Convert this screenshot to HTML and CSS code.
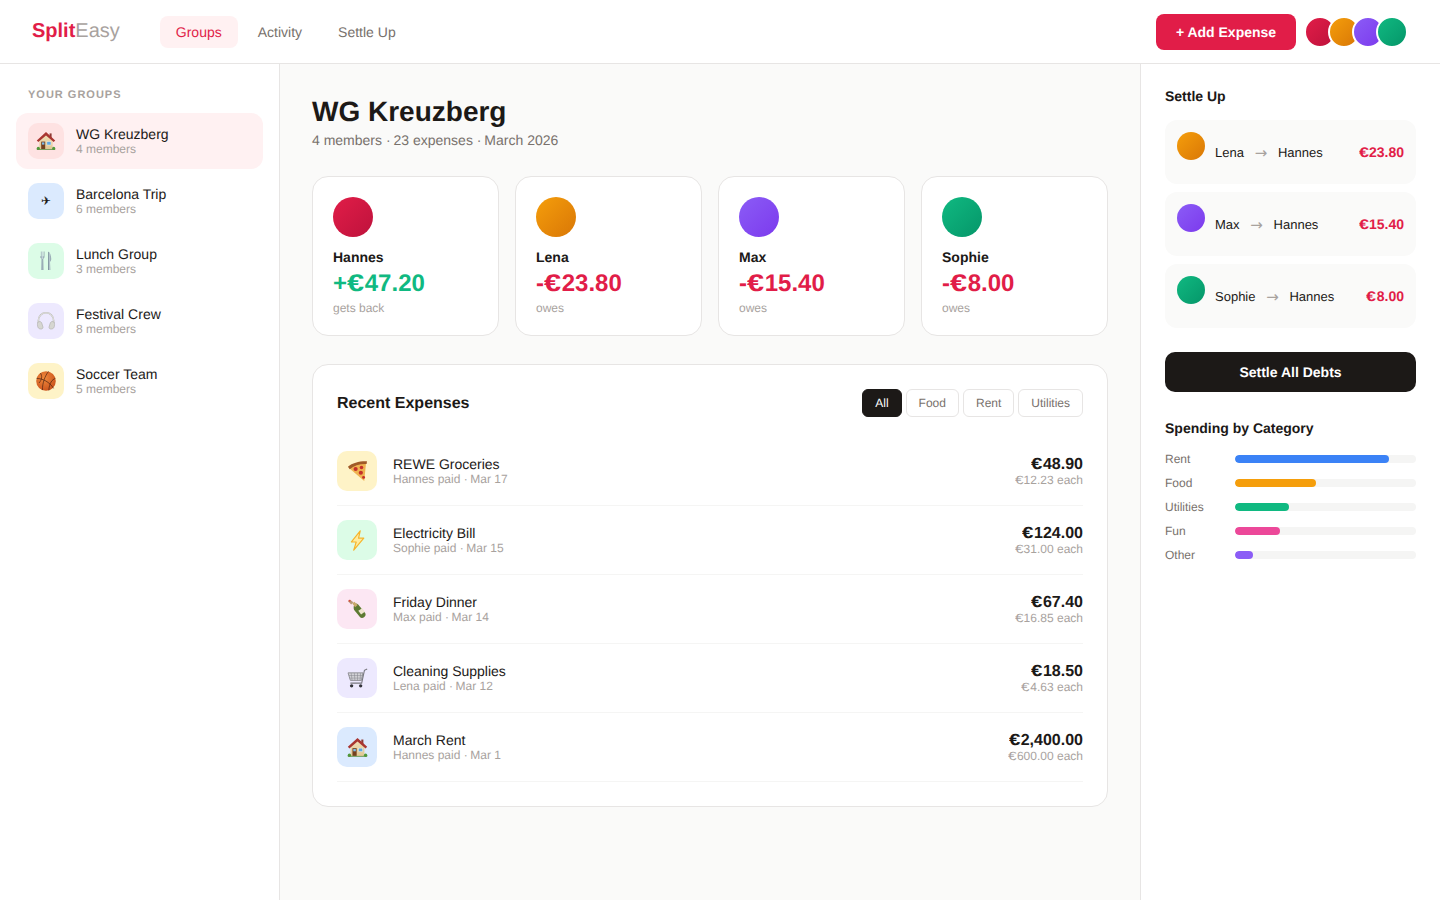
FILE: index.html
```html
<!DOCTYPE html>
<html lang="en">
<head>
<meta charset="utf-8">
<title>SplitEasy</title>
<link rel="stylesheet" href="styles.css">
</head>
<body>
<svg class="sprite" aria-hidden="true">
  <defs>
    <radialGradient id="ball" cx="40%" cy="35%" r="70%"><stop offset="0" stop-color="#f08a3c"/><stop offset="1" stop-color="#c9521c"/></radialGradient>
    <linearGradient id="wall" x1="0" y1="0" x2="0" y2="1"><stop offset="0" stop-color="#f1dfb6"/><stop offset="1" stop-color="#e0c795"/></linearGradient>
    <linearGradient id="steel" x1="0" y1="0" x2="1" y2="0"><stop offset="0" stop-color="#7f939e"/><stop offset=".5" stop-color="#c3d3da"/><stop offset="1" stop-color="#7f939e"/></linearGradient>
    <symbol id="i-house" viewBox="0 0 20 20">
      <rect x="13.6" y="2.4" width="2" height="5" fill="#8e3a34"/>
      <path d="M10 3.5 16.6 9v9H3.4V9z" fill="url(#wall)"/>
      <path d="M10 1 .8 9.4l1.5 1.6L10 4.4l7.7 6.6 1.5-1.6z" fill="#a93631"/>
      <rect x="5.2" y="10.6" width="4" height="7.4" fill="#74401f"/>
      <rect x="6" y="11.4" width="2.4" height="2.2" fill="#7dbbe8"/>
      <rect x="10.9" y="10.6" width="4.1" height="3.4" fill="#5fa9e2" stroke="#f7f0dc" stroke-width=".5"/>
      <circle cx="2.3" cy="17.4" r="1.6" fill="#4f9a3a"/>
      <circle cx="17.7" cy="17.4" r="1.6" fill="#4f9a3a"/>
      <rect x=".8" y="18" width="18.4" height=".8" fill="#5c8f3f"/>
    </symbol>
    <symbol id="i-cutlery" viewBox="0 0 20 20">
      <path d="M6 .6v5.2c0 1 .5 1.6 1.1 2L6.8 19h2.4L8.9 7.8c.6-.4 1.1-1 1.1-2V.6h-.7v4.6h-.6V.6h-.7v4.6h-.6V.6h-.7v4.6h-.6V.6z" fill="url(#steel)" transform="translate(-1.6 0)"/>
      <path d="M11.6 .6c2 1.2 3 4 3 7.4 0 1.6-.6 2.6-1.2 2.8l.4 8.2h-2.4z" fill="url(#steel)" transform="translate(.6 0)"/>
      <path d="M6.4 8v11M12.8 1v18" stroke="#56707c" stroke-width=".4" fill="none"/>
    </symbol>
    <symbol id="i-phones" viewBox="0 0 20 20">
      <path d="M2.4 12V9.4a7.6 7.6 0 0 1 15.2 0V12" fill="none" stroke="#b8b8b3" stroke-width="1.6"/>
      <path d="M2.4 12V9.4a7.6 7.6 0 0 1 15.2 0V12" fill="none" stroke="#eeeeea" stroke-width=".7"/>
      <path d="M2 11c1.4-.9 3-.4 3.6.6l1.4 4.4c.2.9-.4 1.8-1.4 2-1.4.3-3-.4-3.6-1.6-.7-1.4-.8-4.4 0-5.4z" fill="#d6d6d1" stroke="#a2a29e" stroke-width=".5"/>
      <path d="M18 11c-1.4-.9-3-.4-3.6.6l-1.4 4.4c-.2.9.4 1.8 1.4 2 1.4.3 3-.4 3.6-1.6.7-1.4.8-4.4 0-5.4z" fill="#d6d6d1" stroke="#a2a29e" stroke-width=".5"/>
    </symbol>
    <symbol id="i-ball" viewBox="0 0 20 20">
      <circle cx="10" cy="10" r="9.8" fill="url(#ball)"/>
      <g fill="none" stroke="#4a2313" stroke-width=".7">
        <path d="M.6 7.4c6 0 13 3.6 17 10"/>
        <path d="M12.6.4C9 4.6 6.4 12 6.4 19"/>
        <path d="M4.4 2C6.4 5 6 8.6 3 12"/>
        <path d="M19.4 7.4c-3.4 1.2-6 4.6-6.6 12"/>
      </g>
    </symbol>
    <symbol id="i-pizza" viewBox="0 0 20 20">
      <path d="M1.6 6.4C5.6 2.8 12 1 18.2 1.2L16.4 19z" fill="#efb350"/>
      <path d="M.9 5.4C5.2 1.8 12 0 19 .3l-.3 2.6C12.6 2.6 6.6 4.4 2.6 7.8z" fill="#a05a27"/>
      <g fill="#c5302a">
        <circle cx="8.2" cy="7.6" r="2"/>
        <circle cx="13.8" cy="6.2" r="1.7"/>
        <circle cx="13.2" cy="11.2" r="2"/>
        <circle cx="15.8" cy="15.6" r="1.4"/>
      </g>
    </symbol>
    <symbol id="i-bolt" viewBox="0 0 20 20">
      <path d="M12.6 .8 4.2 11.4h4.6L6.4 19.2l9.6-11.4h-5z" fill="#ffec9e" stroke="#f6b42c" stroke-width="1.1" stroke-linejoin="round"/>
    </symbol>
    <symbol id="i-bottle" viewBox="0 0 20 20">
      <path d="M6.8 5.8 9 4.2c1.4.6 2.6 1.6 3.2 3l4.9 5.8c1 1.2.8 3-.6 4.2-1.4 1.2-3.2 1.2-4.2 0L7.4 11.2c-1.2-1-1.4-3.4-.6-5.4z" fill="#5d7a32"/>
      <path d="M5 4.2 7 2.6l3.2 3.2-2.4 2z" fill="#c8a96a"/>
      <path d="M1 2.2 3 .6l3 2.6-2 2z" fill="#b89a78"/>
      <path d="M10.8 11.2l3.6-2.4 2.6 3.4-3.6 2.6z" fill="#efe6cf"/>
      <circle cx="2.4" cy="1.6" r="1" fill="#d44b3c"/>
    </symbol>
    <symbol id="i-cart" viewBox="0 0 20 20">
      <path d="M1 4.6h14.2l-1.4 7.2H3.2z" fill="#d2d2d6" stroke="#85858c" stroke-width=".8" stroke-linejoin="round"/>
      <path d="M4 4.8l.8 7M7 4.8l.5 7M10 4.8v7M13 4.8l-.6 7M1.8 7.2h12.8M2.4 9.6h11.6" fill="none" stroke="#85858c" stroke-width=".5"/>
      <path d="M19.2 1 16.6 2.2 14 14.4H3.2" fill="none" stroke="#77777e" stroke-width="1"/>
      <circle cx="4.4" cy="17" r="1.6" fill="#33333a"/>
      <circle cx="13" cy="17" r="1.6" fill="#33333a"/>
    </symbol>
  </defs>
</svg>
<header class="topbar">
  <div class="logo">Split<span class="logo-light">Easy</span></div>
  <nav class="nav">
    <a class="nav-link active">Groups</a>
    <a class="nav-link">Activity</a>
    <a class="nav-link">Settle Up</a>
  </nav>
  <button class="add-btn">+ Add Expense</button>
  <div class="avatar-stack">
    <span class="stack-av grad-red"></span>
    <span class="stack-av grad-amber"></span>
    <span class="stack-av grad-violet"></span>
    <span class="stack-av grad-green"></span>
  </div>
</header>
<div class="layout">
  <aside class="sidebar">
    <div class="side-label">Your Groups</div>
    <div class="group active">
      <div class="group-icon bg-red"><svg class="ico-g"><use href="#i-house"/></svg></div>
      <div class="group-text"><div class="group-name">WG Kreuzberg</div><div class="group-meta">4 members</div></div>
    </div>
    <div class="group">
      <div class="group-icon bg-blue plane">✈</div>
      <div class="group-text"><div class="group-name">Barcelona Trip</div><div class="group-meta">6 members</div></div>
    </div>
    <div class="group">
      <div class="group-icon bg-green"><svg class="ico-g"><use href="#i-cutlery"/></svg></div>
      <div class="group-text"><div class="group-name">Lunch Group</div><div class="group-meta">3 members</div></div>
    </div>
    <div class="group">
      <div class="group-icon bg-violet"><svg class="ico-g"><use href="#i-phones"/></svg></div>
      <div class="group-text"><div class="group-name">Festival Crew</div><div class="group-meta">8 members</div></div>
    </div>
    <div class="group">
      <div class="group-icon bg-amber"><svg class="ico-g"><use href="#i-ball"/></svg></div>
      <div class="group-text"><div class="group-name">Soccer Team</div><div class="group-meta">5 members</div></div>
    </div>
  </aside>
  <main class="main">
    <h1 class="title">WG Kreuzberg</h1>
    <p class="subtitle">4 members <span class="dot">·</span> 23 expenses <span class="dot">·</span> March 2026</p>
    <section class="balances">
      <div class="bal-card"><div class="bal-av grad-red"></div><div class="bal-name">Hannes</div><div class="bal-amt pos">+<span class="eu">€</span>47.20</div><div class="bal-note">gets back</div></div>
      <div class="bal-card"><div class="bal-av grad-amber"></div><div class="bal-name">Lena</div><div class="bal-amt neg">-<span class="eu">€</span>23.80</div><div class="bal-note">owes</div></div>
      <div class="bal-card"><div class="bal-av grad-violet"></div><div class="bal-name">Max</div><div class="bal-amt neg">-<span class="eu">€</span>15.40</div><div class="bal-note">owes</div></div>
      <div class="bal-card"><div class="bal-av grad-green"></div><div class="bal-name">Sophie</div><div class="bal-amt neg">-<span class="eu">€</span>8.00</div><div class="bal-note">owes</div></div>
    </section>
    <section class="panel">
      <div class="panel-head">
        <h2 class="panel-title">Recent Expenses</h2>
        <div class="filters">
          <button class="filter on">All</button>
          <button class="filter">Food</button>
          <button class="filter">Rent</button>
          <button class="filter">Utilities</button>
        </div>
      </div>
      <div class="exp">
        <div class="exp-icon bg-amber"><svg class="ico-e"><use href="#i-pizza"/></svg></div>
        <div class="exp-text"><div class="exp-name">REWE Groceries</div><div class="exp-meta">Hannes paid <span class="dot">·</span> Mar 17</div></div>
        <div class="exp-right"><div class="exp-amt"><span class="eu">€</span>48.90</div><div class="exp-each"><span class="eu">€</span>12.23 each</div></div>
      </div>
      <div class="exp">
        <div class="exp-icon bg-green"><svg class="ico-e"><use href="#i-bolt"/></svg></div>
        <div class="exp-text"><div class="exp-name">Electricity Bill</div><div class="exp-meta">Sophie paid <span class="dot">·</span> Mar 15</div></div>
        <div class="exp-right"><div class="exp-amt"><span class="eu">€</span>124.00</div><div class="exp-each"><span class="eu">€</span>31.00 each</div></div>
      </div>
      <div class="exp">
        <div class="exp-icon bg-pink"><svg class="ico-e"><use href="#i-bottle"/></svg></div>
        <div class="exp-text"><div class="exp-name">Friday Dinner</div><div class="exp-meta">Max paid <span class="dot">·</span> Mar 14</div></div>
        <div class="exp-right"><div class="exp-amt"><span class="eu">€</span>67.40</div><div class="exp-each"><span class="eu">€</span>16.85 each</div></div>
      </div>
      <div class="exp">
        <div class="exp-icon bg-violet"><svg class="ico-e"><use href="#i-cart"/></svg></div>
        <div class="exp-text"><div class="exp-name">Cleaning Supplies</div><div class="exp-meta">Lena paid <span class="dot">·</span> Mar 12</div></div>
        <div class="exp-right"><div class="exp-amt"><span class="eu">€</span>18.50</div><div class="exp-each"><span class="eu">€</span>4.63 each</div></div>
      </div>
      <div class="exp">
        <div class="exp-icon bg-blue"><svg class="ico-e"><use href="#i-house"/></svg></div>
        <div class="exp-text"><div class="exp-name">March Rent</div><div class="exp-meta">Hannes paid <span class="dot">·</span> Mar 1</div></div>
        <div class="exp-right"><div class="exp-amt"><span class="eu">€</span>2,400.00</div><div class="exp-each"><span class="eu">€</span>600.00 each</div></div>
      </div>
    </section>
  </main>
  <aside class="right">
    <h3 class="right-title">Settle Up</h3>
    <div class="settle">
      <span class="settle-av grad-amber"></span>
      <div class="settle-who"><span>Lena</span><span class="arrow">→</span><span>Hannes</span></div>
      <span class="settle-amt"><span class="eu">€</span>23.80</span>
    </div>
    <div class="settle">
      <span class="settle-av grad-violet"></span>
      <div class="settle-who"><span>Max</span><span class="arrow">→</span><span>Hannes</span></div>
      <span class="settle-amt"><span class="eu">€</span>15.40</span>
    </div>
    <div class="settle">
      <span class="settle-av grad-green"></span>
      <div class="settle-who"><span>Sophie</span><span class="arrow">→</span><span>Hannes</span></div>
      <span class="settle-amt"><span class="eu">€</span>8.00</span>
    </div>
    <button class="settle-all">Settle All Debts</button>
    <h3 class="right-title cat-title">Spending by Category</h3>
    <div class="cat"><span class="cat-label">Rent</span><div class="track"><div class="fill fill-blue" style="width:85%"></div></div></div>
    <div class="cat"><span class="cat-label">Food</span><div class="track"><div class="fill fill-amber" style="width:45%"></div></div></div>
    <div class="cat"><span class="cat-label">Utilities</span><div class="track"><div class="fill fill-green" style="width:30%"></div></div></div>
    <div class="cat"><span class="cat-label">Fun</span><div class="track"><div class="fill fill-pink" style="width:25%"></div></div></div>
    <div class="cat"><span class="cat-label">Other</span><div class="track"><div class="fill fill-violet" style="width:10%"></div></div></div>
  </aside>
</div>
</body>
</html>
```
FILE: styles.css
```css
* { box-sizing: border-box; margin: 0; padding: 0; }
html, body { height: 100%; }
body {
  font-family: "Liberation Sans", Arial, sans-serif;
  color: #1c1917;
  background: #fff;
  overflow: hidden;
  text-rendering: geometricPrecision;
}
button { font-family: inherit; border: none; text-rendering: geometricPrecision; }
.sprite { position: absolute; width: 0; height: 0; }

.eu { display: inline-block; width: 0.74em; text-align: left; transform: scaleX(1.28); transform-origin: left center; }
.dot { letter-spacing: -0.07em; }

.topbar {
  height: 64px;
  display: flex;
  align-items: center;
  padding: 0 32px;
  background: #fff;
  border-bottom: 1px solid #e7e5e4;
}
.logo { font-size: 20px; font-weight: 700; color: #e11d48; margin-right: 40px; }
.logo-light { font-weight: 400; color: #a8a29e; }
.nav { display: flex; gap: 4px; flex: 1; }
.nav-link { font-size: 14px; padding: 8px 16px; line-height: 16px; border-radius: 8px; color: #78716c; }
.nav-link.active { background: #fff1f2; color: #e11d48; }
.add-btn {
  width: 140px; height: 36px;
  background: #e11d48; color: #fff;
  font-size: 14px; font-weight: 700;
  border-radius: 8px;
  margin-right: 8px;
}
.avatar-stack { display: flex; }
.stack-av { width: 32px; height: 32px; border-radius: 50%; border: 2px solid #fff; margin-left: -8px; }
.stack-av:first-child { margin-left: 0; }

.grad-red { background: linear-gradient(135deg, #e11d48, #be123c); }
.grad-amber { background: linear-gradient(135deg, #f59e0b, #d97706); }
.grad-violet { background: linear-gradient(135deg, #8b5cf6, #7c3aed); }
.grad-green { background: linear-gradient(135deg, #10b981, #059669); }
.bg-red { background: #fee2e2; }
.bg-blue { background: #dbeafe; }
.bg-green { background: #dcfce7; }
.bg-violet { background: #ede9fe; }
.bg-amber { background: #fef3c7; }
.bg-pink { background: #fce7f3; }

.layout { display: flex; height: 836px; }

.sidebar { width: 280px; padding: 24px 16px; background: #fff; border-right: 1px solid #e7e5e4; }
.side-label {
  font-size: 11px; font-weight: 700; letter-spacing: 1px; text-transform: uppercase;
  color: #a8a29e; line-height: 13px; padding: 1px 12px 0; margin-bottom: 11px;
}
.group { display: flex; align-items: center; gap: 12px; height: 56px; padding: 0 12px; border-radius: 12px; margin-bottom: 4px; }
.group.active { background: #fff1f2; }
.group-icon { width: 36px; height: 36px; border-radius: 10px; display: flex; align-items: center; justify-content: center; font-size: 18px; }
.plane { font-size: 12px; color: #1c1917; }
.ico-g { width: 20px; height: 20px; }
.group-name { font-size: 14px; line-height: 16px; }
.group-meta { font-size: 12px; line-height: 14px; color: #a8a29e; }

.main { flex: 1; padding: 32px; background: #fafaf9; }
.title { font-size: 28px; font-weight: 700; line-height: 32px; }
.subtitle { font-size: 14px; line-height: 16px; color: #78716c; margin-top: 4px; margin-bottom: 28px; }
.balances { display: grid; grid-template-columns: repeat(4, 1fr); gap: 16px; margin-bottom: 28px; }
.bal-card { height: 160px; padding: 20px; background: #fff; border: 1px solid #e7e5e4; border-radius: 16px; }
.bal-av { width: 40px; height: 40px; border-radius: 50%; margin-bottom: 12px; }
.bal-name { font-size: 14px; font-weight: 700; line-height: 16px; }
.bal-amt { font-size: 24px; font-weight: 700; line-height: 28px; margin-top: 5px; }
.bal-note { font-size: 12px; line-height: 14px; color: #a8a29e; margin-top: 3px; }
.pos { color: #10b981; }
.neg { color: #e11d48; }

.panel { padding: 24px; background: #fff; border: 1px solid #e7e5e4; border-radius: 16px; }
.panel-head { display: flex; justify-content: space-between; align-items: center; margin-bottom: 20px; }
.panel-title { font-size: 16px; font-weight: 700; padding-top: 2px; }
.filters { display: flex; gap: 4px; }
.filter { height: 28px; padding: 0 12px; font-size: 12px; background: #fff; color: #78716c; border: 1px solid #e7e5e4; border-radius: 6px; }
.filter.on { background: #1c1917; color: #fff; border-color: #1c1917; }
.exp { display: flex; align-items: center; gap: 16px; padding: 14px 0; border-bottom: 1px solid #f5f5f4; }
.exp-icon { width: 40px; height: 40px; border-radius: 10px; display: flex; align-items: center; justify-content: center; font-size: 20px; }
.ico-e { width: 21px; height: 21px; }
.exp-text { flex: 1; }
.exp-name { font-size: 14px; line-height: 16px; }
.exp-meta { font-size: 12px; line-height: 14px; color: #a8a29e; }
.exp-right { text-align: right; }
.exp-amt { font-size: 16px; font-weight: 700; line-height: 18px; padding-top: 1px; }
.exp-each { font-size: 12px; line-height: 14px; color: #a8a29e; margin-top: -1px; }

.right { width: 300px; padding: 24px; background: #fff; border-left: 1px solid #e7e5e4; }
.right-title { font-size: 14px; font-weight: 700; line-height: 16px; margin-bottom: 16px; }
.settle { display: flex; align-items: flex-start; height: 64px; padding: 12px; margin-bottom: 8px; background: #fafaf9; border-radius: 12px; }
.settle-av { width: 28px; height: 28px; border-radius: 50%; margin-right: 10px; flex: none; }
.settle-who { flex: 1; display: flex; gap: 10px; font-size: 13px; line-height: 16px; padding-top: 13px; }
.arrow { width: 14px; text-align: center; font-family: "DejaVu Sans", sans-serif; font-size: 15px; color: #a8a29e; }
.settle-amt { font-size: 14px; font-weight: 700; line-height: 16px; padding-top: 12px; color: #e11d48; }
.settle-all { display: block; width: 100%; height: 40px; margin-top: 24px; background: #1c1917; color: #fff; font-size: 14px; font-weight: 700; border-radius: 10px; }
.cat-title { margin-top: 28px; margin-bottom: 11px; }
.cat { display: flex; align-items: center; height: 24px; }
.cat-label { width: 70px; font-size: 12px; color: #78716c; }
.track { flex: 1; height: 8px; background: #f5f5f4; border-radius: 4px; overflow: hidden; }
.fill { height: 100%; border-radius: 4px; }
.fill-blue { background: #3b82f6; }
.fill-amber { background: #f59e0b; }
.fill-green { background: #10b981; }
.fill-pink { background: #ec4899; }
.fill-violet { background: #8b5cf6; }
```
